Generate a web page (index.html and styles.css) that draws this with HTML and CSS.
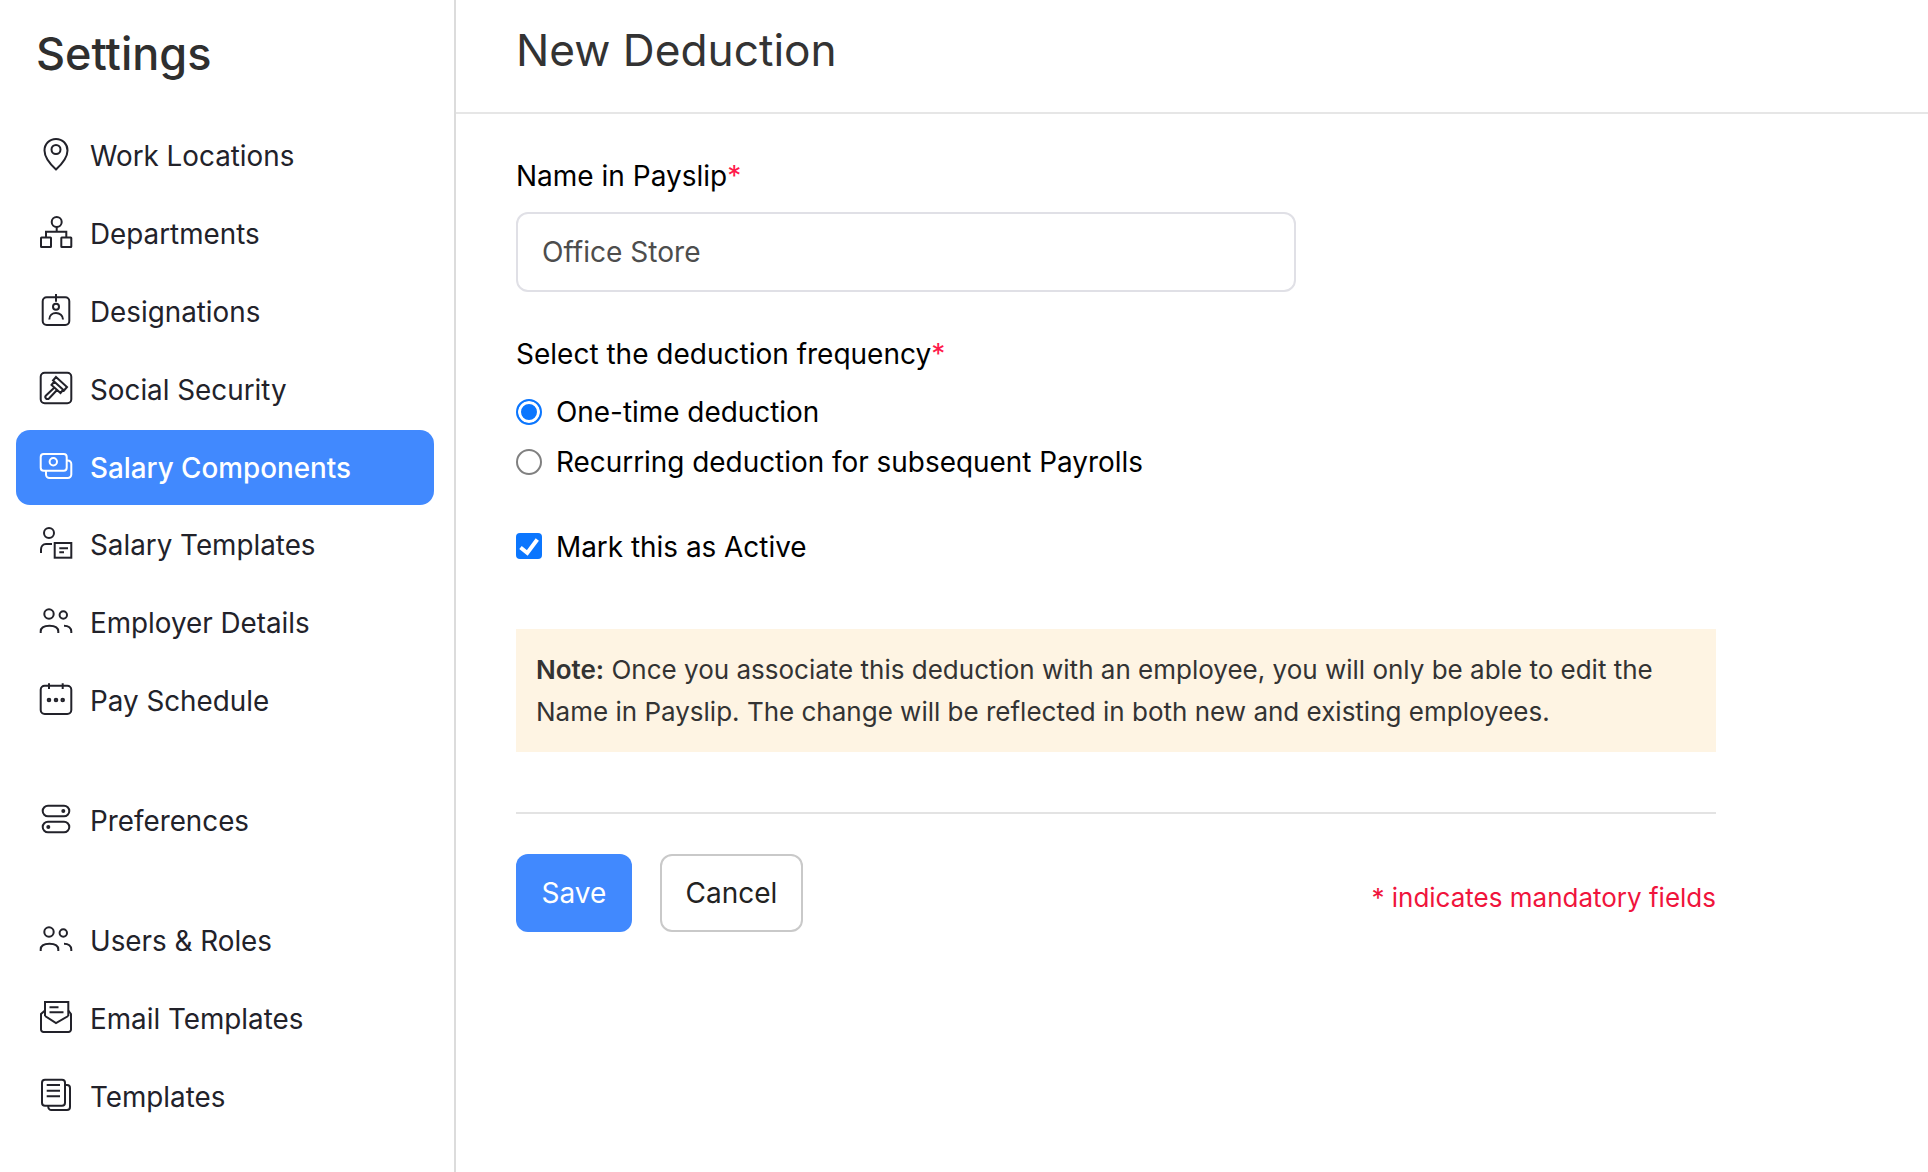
FILE: index.html
```html
<!DOCTYPE html>
<html lang="en">
<head>
<meta charset="utf-8">
<title>New Deduction</title>
<link rel="stylesheet" href="styles.css">
</head>
<body>
<div class="app">
  <aside class="sidebar">
    <h1 class="sidebar-title">Settings</h1>
    <nav class="nav-group">
      <a class="nav-item"><svg class="icon" viewBox="0 0 32 32"><path d="M16 1C9.500 1 4.500 6 4.500 12.500 4.500 19 10 26 16 31.500 22 26 27.500 19 27.500 12.500 27.500 6 22.500 1 16 1Z"/><circle cx="16" cy="11.500" r="4.500"/></svg><span>Work Locations</span></a>
      <a class="nav-item"><svg class="icon" viewBox="0 0 32 32"><circle cx="16.700" cy="6" r="5"/><path d="M16.700 11v4.700M6 21v-5.300h20.300V21"/><rect x="1" y="21.500" width="10" height="9.500" rx="0.500"/><rect x="21.300" y="21.500" width="10" height="9.500" rx="0.500"/></svg><span>Departments</span></a>
      <a class="nav-item"><svg class="icon" viewBox="0 0 32 32"><rect x="2.700" y="3.300" width="26.600" height="27.700" rx="4"/><path d="M16 0v7.700"/><circle cx="16" cy="12.700" r="3"/><path d="M9.300 25.500c0-4 3-6.500 6.700-6.500s7 2.500 7 6.500"/></svg><span>Designations</span></a>
      <a class="nav-item"><svg class="icon" viewBox="0 0 32 32"><rect x="0.700" y="0.700" width="30.600" height="30.600" rx="4"/><path d="M16 5l11 10-3 3.500-11-10ZM14 10 11.500 13l9 8 2.500-3M15 15 6 23.500a2 2 0 0 0 3 3l8.500-9"/></svg><span>Social Security</span></a>
      <a class="nav-item is-active"><svg class="icon" viewBox="0 0 32 32"><rect x="0.700" y="4" width="26" height="16.700" rx="3"/><circle cx="13.300" cy="11.700" r="3.700"/><path d="M6 21v3.500a3.500 3.500 0 0 0 3.500 3.500h18.300a3.500 3.500 0 0 0 3.500-3.500V14a3.500 3.500 0 0 0-3.500-3.500h-1"/></svg><span>Salary Components</span></a>
      <a class="nav-item"><svg class="icon" viewBox="0 0 32 32"><circle cx="9" cy="6" r="5"/><path d="M1 26v-3.500c0-3 2-5.500 5-5.500h6"/><rect x="14.700" y="16" width="16.600" height="14.700"/><path d="M19.300 21.300h8.700M19.300 25.300h4.700"/></svg><span>Salary Templates</span></a>
      <a class="nav-item"><svg class="icon" viewBox="0 0 32 32"><circle cx="9" cy="9" r="4.700"/><circle cx="23.300" cy="10" r="3.700"/><path d="M0.700 28v-1.500c0-3.500 3-5.800 8.800-5.800s8.800 2.300 8.800 5.800V28M24 20.700c4.500 0 7.300 2.300 7.300 5.800V28"/></svg><span>Employer Details</span></a>
      <a class="nav-item"><svg class="icon" viewBox="0 0 32 32"><rect x="0.700" y="2.700" width="30.600" height="28.300" rx="4"/><path d="M9 0.300V6M22.700 0.300V6"/><circle cx="9" cy="17" r="1.300"/><circle cx="16" cy="17" r="1.300"/><circle cx="22.700" cy="17" r="1.300"/></svg><span>Pay Schedule</span></a>
    </nav>
    <nav class="nav-group">
      <a class="nav-item"><svg class="icon" viewBox="0 0 32 32"><rect x="2.700" y="2.700" width="26.600" height="10.600" rx="5.300"/><circle class="icon-dot" cx="23.300" cy="8" r="2"/><rect x="2.700" y="18.700" width="26.600" height="10.600" rx="5.300"/><circle class="icon-dot" cx="8.300" cy="24" r="2"/></svg><span>Preferences</span></a>
    </nav>
    <nav class="nav-group">
      <a class="nav-item"><svg class="icon" viewBox="0 0 32 32"><circle cx="9" cy="9" r="4.700"/><circle cx="23.300" cy="10" r="3.700"/><path d="M0.700 28v-1.500c0-3.500 3-5.800 8.800-5.800s8.800 2.300 8.800 5.800V28M24 20.700c4.500 0 7.300 2.300 7.300 5.800V28"/></svg><span>Users &amp; Roles</span></a>
      <a class="nav-item"><svg class="icon" viewBox="0 0 32 32"><path d="M5 15V1h23.300v14"/><path d="M9.500 6.300h9M9.500 11.300h14"/><path d="M5 9.500 1 13v15.500A2.500 2.500 0 0 0 3.500 31h25a2.500 2.500 0 0 0 2.500-2.500V13l-2.700-3.500"/><path d="M5 15l11 7 12.300-7"/></svg><span>Email Templates</span></a>
      <a class="nav-item"><svg class="icon" viewBox="0 0 32 32"><rect x="2" y="0.700" width="23" height="26" rx="3"/><path d="M6.700 6h13.300M6.700 11.700h13.300M6.700 17.300h13.300"/><path d="M25 6h2a3 3 0 0 1 3 3v19a3 3 0 0 1-3 3H11.300a3 3 0 0 1-3-3v-1.300"/></svg><span>Templates</span></a>
    </nav>
  </aside>
  <main class="main">
    <header class="page-header"><h2 class="page-title">New Deduction</h2></header>
    <form class="form">
      <label class="field-label name-label">Name in Payslip<span class="req">*</span></label>
      <div class="text-input">Office Store</div>
      <div class="field-label freq-label">Select the deduction frequency<span class="req">*</span></div>
      <div class="option option-first"><span class="radio radio-on"></span><span>One-time deduction</span></div>
      <div class="option"><span class="radio"></span><span>Recurring deduction for subsequent Payrolls</span></div>
      <div class="option option-check"><span class="checkbox"><svg viewBox="0 0 26 26"><path d="M4.500 14.500l6.800 5.500 10-13.500"/></svg></span><span>Mark this as Active</span></div>
      <div class="note"><b>Note:</b> Once you associate this deduction with an employee, you will only be able to edit the Name in Payslip. The change will be reflected in both new and existing employees.</div>
      <div class="footer">
        <div class="buttons">
          <button type="button" class="btn btn-primary">Save</button>
          <button type="button" class="btn btn-secondary">Cancel</button>
        </div>
        <span class="mandatory">* indicates mandatory fields</span>
      </div>
    </form>
  </main>
</div>
</body>
</html>
```

FILE: styles.css
```css
* { box-sizing: border-box; }
html, body { margin: 0; height: 100%; }
body {
  font-family: Inter, "Liberation Sans", sans-serif;
  color: #21263c;
  background: #fff;
  overflow: hidden;
}
.app { display: flex; height: 1172px; }
.sidebar {
  width: 456px;
  flex: none;
  border-right: 2px solid #dcdcdc;
  padding-left: 16px;
}
.sidebar-title {
  margin: 0;
  height: 118px;
  padding: 26px 0 0 20px;
  font-size: 45px;
  line-height: 56px;
  font-weight: 500;
  color: #2f2f2f;
}
.nav-group {
  display: flex;
  flex-direction: column;
  gap: 2px;
  margin-bottom: 44px;
}
.nav-item {
  display: flex;
  align-items: center;
  gap: 18px;
  height: 75.900px;
  width: 418px;
  padding-left: 24px;
  border-radius: 14px;
  font-size: 27.800px;
  color: #22222a;
}
.nav-item.is-active { background: #4189fe; color: #fff; font-weight: 500; }
.icon {
  width: 32px;
  height: 32px;
  flex: none;
  fill: none;
  stroke: currentColor;
  stroke-width: 2;
  overflow: visible;
  position: relative;
  top: -2px;
}
.icon-dot { fill: currentColor; stroke: none; }
.main { flex: 1; min-width: 0; }
.page-header {
  height: 114px;
  border-bottom: 2px solid #e6e6e6;
  padding-left: 60px;
}
.page-title {
  margin: 0;
  padding-top: 22px;
  font-size: 44.200px;
  line-height: 56px;
  font-weight: 400;
  color: #333;
}
.form { width: 1260px; padding: 44px 0 0 60px; }
.field-label { font-size: 28px; line-height: 36px; color: #000; font-weight: 400; }
.name-label { display: block; }
.req { color: #ff1a4b; }
.text-input {
  width: 780px;
  height: 80px;
  margin-top: 18px;
  border: 2px solid #e0e0e6;
  border-radius: 12px;
  padding: 0 24px;
  display: flex;
  align-items: center;
  font-size: 28.100px;
  color: #4d4d4d;
}
.freq-label { margin-top: 44px; }
.option {
  display: flex;
  align-items: center;
  gap: 14px;
  height: 50px;
  font-size: 27.900px;
  color: #000;
}
.option-first { margin-top: 15px; }
.option-check { margin-top: 35px; }
.radio {
  width: 26px;
  height: 26px;
  border-radius: 50%;
  border: 2px solid #808080;
  background: #fff;
  flex: none;
}
.radio-on {
  border: 2.500px solid #0b76fe;
  background: #0b76fe;
  box-shadow: inset 0 0 0 3px #fff;
}
.checkbox {
  width: 26px;
  height: 26px;
  border-radius: 4px;
  background: #0b76fe;
  flex: none;
  display: flex;
  position: relative;
  top: -1px;
}
.checkbox svg {
  width: 26px;
  height: 26px;
  fill: none;
  stroke: #fff;
  stroke-width: 4;
}
.note {
  margin-top: 57px;
  width: 1200px;
  height: 123px;
  background: #fef4e3;
  padding: 20px;
  font-size: 26px;
  line-height: 42px;
  color: #333;
}
.note b { font-weight: 600; }
.footer {
  width: 1200px;
  margin-top: 60px;
  border-top: 2px solid #e3e3e3;
  padding-top: 40px;
  display: flex;
  justify-content: space-between;
  align-items: flex-end;
}
.buttons { display: flex; gap: 28px; }
.btn {
  height: 78px;
  border-radius: 12px;
  font: inherit;
  font-size: 28px;
  cursor: pointer;
}
.btn-primary { width: 116px; background: #4189fe; color: #fff; border: 0; font-weight: 400; }
.btn-secondary { width: 143px; background: #fff; color: #222; border: 2px solid #c9c9c9; }
.mandatory { font-size: 26px; line-height: 34px; color: #f0143c; padding-bottom: 17px; }
```
